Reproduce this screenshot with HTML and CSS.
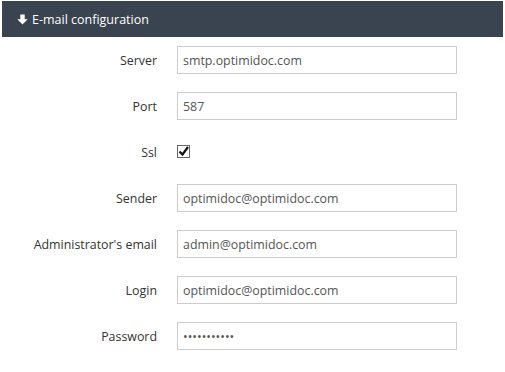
FILE: index.html
```html
<!DOCTYPE html>
<html lang="en">
<head>
    <meta charset="UTF-8">
    <title>E-mail configuration</title>
    <link rel="stylesheet" href="styles.css">
</head>
<body>
    <div class="panel">
        <div class="panel-heading">
            <svg class="arrow" width="11" height="11" viewBox="0 0 11 11">
                <path d="M3.3 0.5h4.4v4.8h3l-5.2 5.2-5.2-5.2h3z" fill="#fff"/>
            </svg>
            E-mail configuration
        </div>

        <form class="panel-body">
            <div class="form-row">
                <label for="server">Server</label>
                <input type="text" id="server" value="smtp.optimidoc.com">
            </div>
            <div class="form-row">
                <label for="port">Port</label>
                <input type="text" id="port" value="587">
            </div>
            <div class="form-row">
                <label for="ssl">Ssl</label>
                <span class="check" id="ssl">
                    <svg width="11" height="11" viewBox="0 0 11 11">
                        <path d="M1.5 5.5l3 3 5.5-7.5" fill="none" stroke="#111" stroke-width="2.2"/>
                    </svg>
                </span>
            </div>
            <div class="form-row">
                <label for="sender">Sender</label>
                <input type="text" id="sender" value="optimidoc@optimidoc.com">
            </div>
            <div class="form-row">
                <label for="admin">Administrator's email</label>
                <input type="text" id="admin" value="admin@optimidoc.com">
            </div>
            <div class="form-row">
                <label for="login">Login</label>
                <input type="text" id="login" value="optimidoc@optimidoc.com">
            </div>
            <div class="form-row">
                <label for="password">Password</label>
                <input type="password" id="password" value="optimidoc12">
            </div>
        </form>
    </div>
</body>
</html>
```

FILE: styles.css
```css
body {
    font-family: "Open Sans", "Noto Sans", sans-serif;
    margin: 0;
    padding: 1px 2px;
    background: #fff;
}
.panel-heading {
    background-color: #3a4350;
    color: white;
    font-size: 12.5px;
    height: 36px;
    display: flex;
    align-items: center;
    padding-left: 15px;
}
.arrow {
    margin-right: 4px;
}
.panel-body {
    padding-top: 9px;
}
.form-row {
    display: flex;
    align-items: center;
    height: 28px;
    margin-bottom: 18px;
}
label {
    width: 155px;
    text-align: right;
    font-size: 12.4px;
    color: #333;
    padding-right: 20px;
}
input[type="text"],
input[type="password"] {
    width: 280px;
    height: 28px;
    box-sizing: border-box;
    border: 1px solid #ccc;
    padding: 0 5px;
    font-family: inherit;
    font-size: 12.4px;
    color: #555;
    margin: 0;
    outline: none;
}
.check {
    width: 13px;
    height: 13px;
    box-sizing: border-box;
    border: 1px solid #666;
    display: flex;
    align-items: center;
    justify-content: center;
    margin-top: -2px;
}
```
